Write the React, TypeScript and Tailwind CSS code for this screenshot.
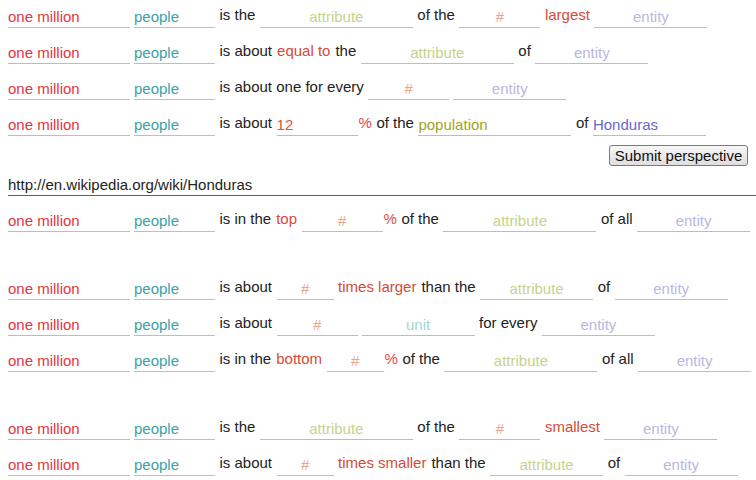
type Part =
  | { kind: 'text'; t: string; c?: string }
  | { kind: 'field'; w: string; t: string; c: string; ph?: boolean; pct?: boolean };

const RED = 'text-[#e2363e]';
const TEAL = 'text-[#37a3a6]';
const HOT = 'text-[#d64a36]';

const txt = (t: string, c?: string): Part => ({ kind: 'text', t, c });
const attr = (w = 'w-[153px]'): Part => ({ kind: 'field', w, t: 'attribute', c: 'text-[#c6d38c]', ph: true });
const num = (w = 'w-[81px]', pct = false): Part => ({ kind: 'field', w, t: '#', c: 'text-[#f0a386]', ph: true, pct });
const entity = (): Part => ({ kind: 'field', w: 'w-[113px]', t: 'entity', c: 'text-[#b8b8e2]', ph: true });

function Field({ p }: { p: Extract<Part, { kind: 'field' }> }) {
  return (
    <div className="flex items-end shrink-0">
      <div
        className={`${p.w} ${p.c} ${p.ph ? 'text-center' : 'text-left'} border-b border-[#bdbdbd] leading-[18px] pb-[1px]`}
      >
        {p.t}
      </div>
      {p.pct && <span className="leading-[18px] pb-[4px] pl-[1px] text-[#e04848]">%</span>}
    </div>
  );
}

function Row({ parts, className = '' }: { parts: Part[]; className?: string }) {
  return (
    <div className={`flex items-end gap-[4px] h-[36px] pb-[8px] whitespace-nowrap ${className}`}>
      <div className={`w-[122px] ${RED} border-b border-[#bdbdbd] leading-[18px] pb-[1px] shrink-0`}>one million</div>
      <div className={`w-[81px] ${TEAL} border-b border-[#bdbdbd] leading-[18px] pb-[1px] shrink-0`}>people</div>
      {parts.map((p, i) =>
        p.kind === 'text' ? (
          <span key={i} className={`leading-[18px] pb-[4px] px-[0.5px] shrink-0 ${p.c ?? 'text-[#222]'}`}>
            {p.t}
          </span>
        ) : (
          <Field key={i} p={p} />
        )
      )}
    </div>
  );
}

export default function App() {
  return (
    <div className="bg-white min-h-[480px] px-2 text-[15px] text-[#222] overflow-hidden font-['Liberation_Sans',Arial,sans-serif]">
      <Row parts={[txt('is the'), attr(), txt('of the'), num(), txt('largest', HOT), entity()]} />
      <Row parts={[txt('is about'), txt('equal to', HOT), txt('the'), attr(), txt('of'), entity()]} />
      <Row parts={[txt('is about one for every'), num(), entity()]} />
      <Row
        parts={[
          txt('is about'),
          { kind: 'field', w: 'w-[81px]', t: '12', c: 'text-[#d9573a]', pct: true },
          txt('of the'),
          { kind: 'field', w: 'w-[153px]', t: 'population', c: 'text-[#a3a320]' },
          txt('of'),
          { kind: 'field', w: 'w-[113px]', t: 'Honduras', c: 'text-[#6868cf]' },
        ]}
      />

      <div className="flex justify-end mt-[1px]">
        <button className="h-[21px] w-[139px] rounded-[3px] border border-[#7a7a7a] bg-gradient-to-b from-[#f7f7f7] to-[#dedede] text-[15px] leading-[18px] text-[#111]">
          Submit perspective
        </button>
      </div>

      <div className="mt-[10px] leading-[18px] pb-[1px] border-b border-[#606060] -mr-2">
        http://en.wikipedia.org/wiki/Honduras
      </div>

      <Row
        className="mt-[8px]"
        parts={[txt('is in the'), txt('top', HOT), num('w-[81px]', true), txt('of the'), attr(), txt('of all'), entity()]}
      />

      <div className="mt-[32px]">
        <Row
          parts={[
            txt('is about'),
            num('w-[57px]'),
            txt('times larger', HOT),
            txt('than the'),
            attr('w-[113px]'),
            txt('of'),
            entity(),
          ]}
        />
        <Row
          parts={[
            txt('is about'),
            num(),
            { kind: 'field', w: 'w-[113px]', t: 'unit', c: 'text-[#a2d8d2]', ph: true },
            txt('for every'),
            entity(),
          ]}
        />
        <Row
          parts={[
            txt('is in the'),
            txt('bottom', HOT),
            num('w-[57px]', true),
            txt('of the'),
            attr(),
            txt('of all'),
            entity(),
          ]}
        />
      </div>

      <div className="mt-[32px]">
        <Row parts={[txt('is the'), attr(), txt('of the'), num(), txt('smallest', HOT), entity()]} />
        <Row
          parts={[
            txt('is about'),
            num('w-[57px]'),
            txt('times smaller', HOT),
            txt('than the'),
            attr('w-[113px]'),
            txt('of'),
            entity(),
          ]}
        />
      </div>
    </div>
  );
}
